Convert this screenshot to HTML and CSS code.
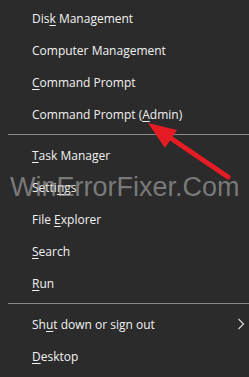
FILE: index.html
```html
<!DOCTYPE html>
<html>
<head>
<meta charset="utf-8">
<link rel="stylesheet" href="styles.css">
</head>
<body>
<div class="menu">
  <div class="item"><span>Dis<u>k</u> Management</span></div>
  <div class="item"><span>Computer Mana<u>g</u>ement</span></div>
  <div class="item"><span><u>C</u>ommand Prompt</span></div>
  <div class="item"><span>Command Prompt (<u>A</u>dmin)</span></div>
  <div class="sep"></div>
  <div class="item"><span><u>T</u>ask Manager</span></div>
  <div class="item"><span>Setti<u>n</u>gs</span></div>
  <div class="item"><span>File <u>E</u>xplorer</span></div>
  <div class="item"><span><u>S</u>earch</span></div>
  <div class="item"><span><u>R</u>un</span></div>
  <div class="sep"></div>
  <div class="item sub"><span>Sh<u>u</u>t down or sign out</span>
    <svg class="chev" width="8" height="12" viewBox="0 0 8 12"><path d="M1.5 1 L6.5 6 L1.5 11" fill="none" stroke="#d8d8d8" stroke-width="1.2"/></svg>
  </div>
  <div class="item"><span><u>D</u>esktop</span></div>
</div>
<div class="watermark">WinErrorFixer.Com</div>
<svg class="arrow" width="249" height="377" viewBox="0 0 249 377">
  <line x1="169" y1="137" x2="228" y2="177" stroke="#e51c24" stroke-width="5" stroke-linecap="round"/>
  <polygon points="148,123 177,130 165,148" fill="#e51c24"/>
</svg>
</body>
</html>
```
FILE: styles.css
```css
html, body {
  margin: 0;
  padding: 0;
  background: #2b2b2b;
}
body {
  width: 249px;
  height: 377px;
  overflow: hidden;
  position: relative;
  font-family: "Open Sans", "Noto Sans", sans-serif;
  font-size: 12px;
  color: #f2f2f2;
}
.menu {
  padding-top: 2px;
  display: flex;
  flex-direction: column;
}
.item {
  height: 32px;
  padding-left: 32px;
  white-space: nowrap;
  display: flex;
  align-items: center;
}
.item u {
  text-decoration-thickness: 1px;
  text-underline-offset: 2px;
}
.sub {
  justify-content: space-between;
  padding-right: 4px;
}
.chev {
  display: block;
}
.sep {
  height: 1px;
  margin: 4px 0 4px 8px;
  background: #8a8a8a;
}
.watermark {
  position: absolute;
  left: 10px;
  top: 174px;
  font-family: "Liberation Sans", Arial, sans-serif;
  font-size: 27px;
  line-height: 1;
  color: rgba(190, 190, 190, 0.55);
  white-space: nowrap;
  pointer-events: none;
}
.arrow {
  position: absolute;
  left: 0;
  top: 0;
  pointer-events: none;
}
```
